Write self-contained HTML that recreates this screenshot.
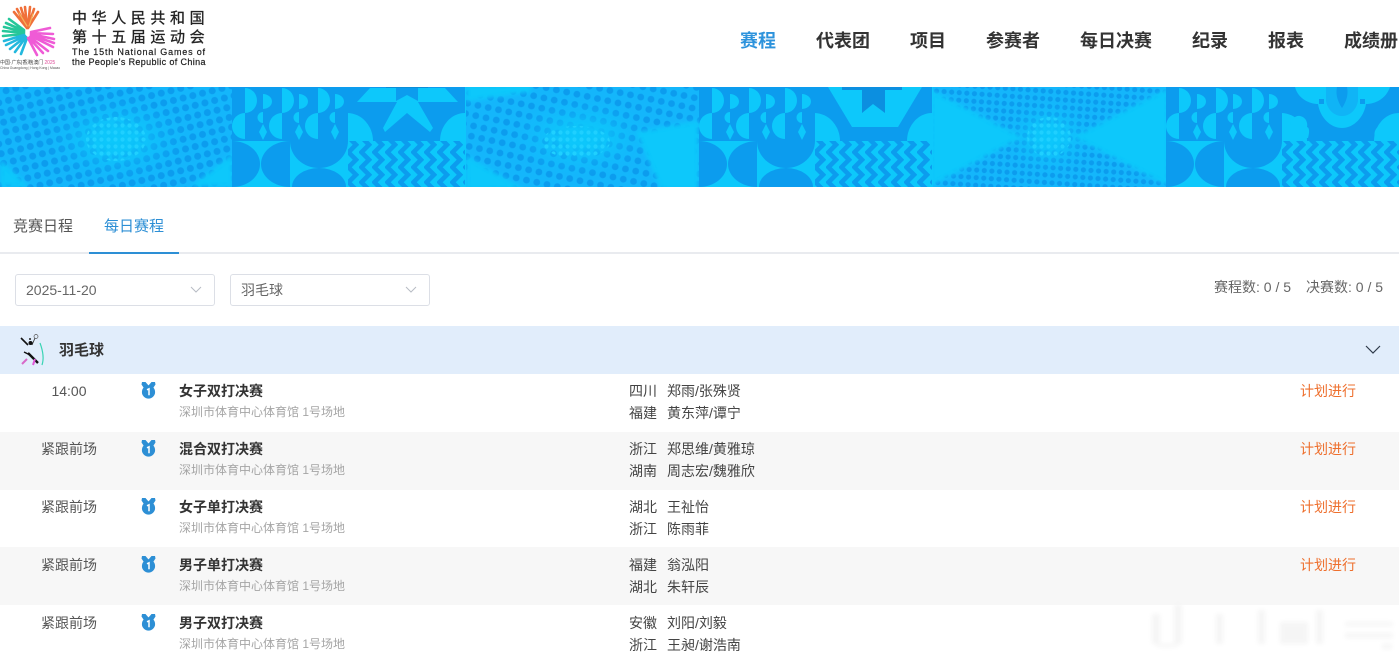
<!DOCTYPE html>
<html lang="zh"><head><meta charset="utf-8"><title>赛程</title>
<style>
html,body{margin:0;padding:0;background:#fff}
#p{position:relative;width:1399px;height:662px;overflow:hidden;background:#fff;font-family:"Liberation Sans","Noto Sans CJK SC",sans-serif;font-size:14px;color:#333}
#p div.t{position:absolute;white-space:nowrap;line-height:20px}
.n{top:30px;font-size:18px;font-weight:700;color:#333;line-height:22px!important}
.r{position:absolute;left:0;width:1399px;height:58px}
.g{background:#f7f7f7}
.time{left:0;width:138px;text-align:center;color:#555}
.b{left:179px;font-weight:700;color:#333}
.v{left:179px;color:#a5a5a5;font-size:12px}
.c{left:629px;color:#444}
.m{left:667px;color:#444}
.s{left:1300px;color:#ee6f2d}
.sel{position:absolute;top:274px;width:198px;height:30px;border:1px solid #dcdfe6;border-radius:3px}
svg{position:absolute}
</style></head><body><div id="p">

<!-- logo -->
<svg style="left:0;top:0" width="62" height="72" viewBox="0 0 62 72">
<g fill="none" stroke-width="2.6" stroke-linecap="round">
<g stroke="#f0703a"><path d="M27 28L14 12M27 28L17 9M27 27L21 8M27 27L25 7M28 27L30 7M28 27L34 9M28 28L38 12"/></g>
<g stroke="#f5b25a" stroke-width="1.2"><path d="M27 26L19 13M29 26L33 14"/></g>
<g stroke="#26c79a"><path d="M24 32L4 27M24 33L3 31M24 34L3 36M24 31L6 23M24 30L9 19"/></g>
<g stroke="#23b8dd"><path d="M24 35L4 41M25 36L6 45M25 37L10 49M26 37L15 52M27 38L21 54"/></g>
<g stroke="#ef5bd6"><path d="M31 36L53 47M31 35L54 43M31 34L54 39M30 37L48 51M29 38L43 53M28 38L37 55M31 33L53 34M31 32L50 28"/></g>
</g></svg>
<div class="t" style="left:0;top:60px;font-size:5px;line-height:6px;color:#444;letter-spacing:-.1px">中国·广东|香港|澳门 <span style="color:#e0529c">2025</span></div>
<div class="t" style="left:0;top:66px;font-size:3.4px;line-height:4px;color:#555">China Guangdong | Hong Kong | Macao</div>
<div class="t" style="left:72px;top:9px;font-size:15px;letter-spacing:4.6px;color:#222;-webkit-text-stroke:.3px #222">中华人民共和国</div>
<div class="t" style="left:72px;top:28px;font-size:15px;letter-spacing:4.6px;color:#222;-webkit-text-stroke:.3px #222">第十五届运动会</div>
<div class="t" style="left:72px;top:42px;font-size:9px;letter-spacing:.82px;color:#222;-webkit-text-stroke:.2px #222">The 15th National Games of</div>
<div class="t" style="left:72px;top:52px;font-size:9px;letter-spacing:.37px;color:#222;-webkit-text-stroke:.2px #222">the People's Republic of China</div>

<!-- nav -->
<div class="t n" style="left:740px;color:#2d93dc">赛程</div>
<div class="t n" style="left:816px">代表团</div>
<div class="t n" style="left:910px">项目</div>
<div class="t n" style="left:986px">参赛者</div>
<div class="t n" style="left:1080px">每日决赛</div>
<div class="t n" style="left:1192px">纪录</div>
<div class="t n" style="left:1268px">报表</div>
<div class="t n" style="left:1344px">成绩册</div>

<!-- banner -->
<svg style="left:0;top:87px" width="1399" height="100" viewBox="0 0 1399 100">
<defs>
<pattern id="d1" width="10" height="10" patternUnits="userSpaceOnUse" patternTransform="rotate(-14)"><circle cx="5" cy="5" r="3.5" fill="#0c9cee"/></pattern>
<pattern id="d2" width="10.5" height="10.5" patternUnits="userSpaceOnUse" patternTransform="rotate(12)"><circle cx="5" cy="5" r="3.4" fill="#0c9cee"/></pattern>
<pattern id="d3" width="7.6" height="7.6" patternUnits="userSpaceOnUse" patternTransform="rotate(4)"><circle cx="3.8" cy="3.8" r="2.6" fill="#0c9cee"/></pattern>
<pattern id="lt" width="7" height="7" patternUnits="userSpaceOnUse"><circle cx="3.5" cy="3.5" r="2.1" fill="#1fd0ff"/></pattern>
<radialGradient id="rg" cx=".5" cy=".5" r=".5"><stop offset="0" stop-color="#000"/><stop offset=".25" stop-color="#111"/><stop offset=".7" stop-color="#bbb"/><stop offset="1" stop-color="#fff"/></radialGradient>
<filter id="sf"><feGaussianBlur stdDeviation="2"/></filter>
<mask id="m1" maskUnits="userSpaceOnUse" x="0" y="0" width="233" height="100"><rect width="233" height="100" fill="#fff"/><ellipse cx="116" cy="52" rx="70" ry="42" fill="url(#rg)"/><path d="M0 72V100H30ZM190 100H233V66Z" fill="#000" filter="url(#sf)"/></mask>
<mask id="m2" maskUnits="userSpaceOnUse" x="0" y="0" width="233" height="100"><rect width="233" height="100" fill="#fff"/><ellipse cx="116" cy="50" rx="70" ry="38" fill="url(#rg)"/><path d="M0 -3H65V5L0 15ZM233 33V103H195L170 45ZM0 68V103H60Z" fill="#000" filter="url(#sf)"/></mask>
<mask id="m3" maskUnits="userSpaceOnUse" x="0" y="0" width="233" height="100"><rect width="233" height="100" fill="#fff"/><ellipse cx="116" cy="50" rx="45" ry="36" fill="url(#rg)"/><path d="M-3 2V100L90 50ZM236 0V100L140 50Z" fill="#000" filter="url(#sf)"/></mask>
<pattern id="zz" width="13" height="15" patternUnits="userSpaceOnUse" x="348" y="54"><rect width="13" height="15" fill="#0dc8fb"/><path d="M2.5 -3.75L10 3.75L2.5 11.25L10 18.75" fill="none" stroke="#0c9cee" stroke-width="4.6"/></pattern>
<g id="geo">
<rect width="233" height="54" fill="#0c9cee"/>
<rect y="54" width="116" height="46" fill="#0dc8fb"/>
<path d="M0 54A28 23 0 0 1 0 100Z" fill="#0c9cee"/>
<path d="M58 54A29 23 0 0 0 58 100Z" fill="#0c9cee"/>
<path d="M58 54A29 27 0 0 0 116 54Z" fill="#0c9cee"/>
<path d="M60 100A27 19 0 0 1 114 100Z" fill="#0c9cee"/>
<g fill="#0dc8fb">
<path d="M13 1A12 12.5 0 0 1 13 26Z"/><path d="M50 1A12 12.5 0 0 1 50 26Z"/><path d="M86 1A12 12.5 0 0 1 86 26Z"/>
<path d="M13 26V52A13 13 0 0 1 13 26Z"/><path d="M50 26V52A13 13 0 0 1 50 26Z"/><path d="M86 26V52A13 13 0 0 1 86 26Z"/>
<path d="M31 7A9 7.5 0 0 1 31 22Z"/><path d="M67 7A9 7.5 0 0 1 67 22Z"/><path d="M103 7A9 7.5 0 0 1 103 22Z"/>
<path d="M31 25A5 5 0 0 0 31 36Z"/><path d="M67 25A5 5 0 0 0 67 36Z"/><path d="M103 25A5 5 0 0 0 103 36Z"/>
<path d="M31 37L35 45L31 53L27 45Z"/><path d="M67 37L71 45L67 53L63 45Z"/><path d="M103 37L107 45L103 53L99 45Z"/>
</g>
<path d="M116 26A26 28 0 0 1 141 54H116Z" fill="#0dc8fb"/>
<path d="M233 26A25 28 0 0 0 208 54H233Z" fill="#0dc8fb"/>
<rect x="116" y="54" width="117" height="46" fill="url(#zz)"/>
</g>
</defs>
<rect width="1399" height="100" fill="#0dc8fb"/>
<g><rect width="233" height="100" fill="#14b6fb" mask="url(#m1)"/><rect width="233" height="100" fill="url(#d1)" mask="url(#m1)"/><ellipse cx="116" cy="52" rx="30" ry="22" fill="url(#lt)"/></g>
<g transform="translate(466 0)"><rect width="233" height="100" fill="#14b6fb" mask="url(#m2)"/><rect width="233" height="100" fill="url(#d2)" mask="url(#m2)"/><ellipse cx="110" cy="55" rx="34" ry="16" fill="url(#lt)"/></g>
<g transform="translate(933 0)"><rect width="233" height="100" fill="#14b6fb" mask="url(#m3)"/><rect width="233" height="100" fill="url(#d3)" mask="url(#m3)"/><ellipse cx="116" cy="50" rx="22" ry="20" fill="url(#lt)"/></g>
<use href="#geo" x="232"/>
<use href="#geo" x="699"/>
<use href="#geo" x="1166"/>
<!-- star -->
<rect x="386" y="0" width="42" height="1" fill="#0a8fd8"/>
<path d="M357 15L370 1H396V14L407 8L418 14V1H445L458 15H418L433 41L430 45L407 26L385 45L383 41L397 15Z" fill="#0dc8fb"/>
<!-- octagon -->
<path d="M828 0H922L898 40H852Z" fill="#0dc8fb"/>
<path d="M842 0H862V3H842ZM885 0H902V3H885ZM862 0H885V26L873 17L862 26Z" fill="#0c8fe0"/>
<!-- flower -->
<path d="M1295 0C1298 12 1310 17 1318 17C1320 30 1330 41 1342 41C1354 41 1364 30 1366 17C1375 17 1386 12 1390 0Z" fill="#0dc8fb"/>
<path d="M1326 0V14C1328 24 1335 29 1342 29C1349 29 1356 24 1358 14V0Z" fill="#10b4f6"/>
<path d="M1342 21C1336 12 1336 5 1337 0H1347C1348 5 1348 12 1342 21Z" fill="#0c9cee"/>
<rect x="1319" y="12" width="5" height="5" fill="#0c9cee"/><rect x="1360" y="12" width="5" height="5" fill="#0c9cee"/>
<path d="M1283 51C1282 44 1285 39 1290 38C1291 32 1296 28 1300 29C1306 30 1308 36 1307 40C1311 41 1308 51 1308 51Z" fill="#0dc8fb"/>
<path d="M1375 51C1373 44 1377 39 1382 38C1383 32 1388 28 1394 28H1399V51Z" fill="#0dc8fb"/>
</svg>

<!-- tabs -->
<div class="t" style="left:13px;top:217px;font-size:15px;color:#555">竞赛日程</div>
<div class="t" style="left:104px;top:217px;font-size:15px;color:#2d8fd5">每日赛程</div>
<div style="position:absolute;left:0;top:252px;width:1399px;height:2px;background:#e9ebef"></div>
<div style="position:absolute;left:89px;top:252px;width:90px;height:2px;background:#2d8fd5"></div>

<!-- selects -->
<div class="sel" style="left:15px"></div>
<div class="sel" style="left:230px"></div>
<div class="t" style="left:26px;top:280px;color:#666">2025-11-20</div>
<div class="t" style="left:241px;top:280px;color:#666">羽毛球</div>
<svg style="left:190px;top:286px" width="12" height="8"><path d="M1 1L6 6L11 1" fill="none" stroke="#b8bcc4"/></svg>
<svg style="left:405px;top:286px" width="12" height="8"><path d="M1 1L6 6L11 1" fill="none" stroke="#b8bcc4"/></svg>
<div class="t" style="left:1214px;top:277px;color:#666;font-size:14px">赛程数: 0 / 5</div>
<div class="t" style="left:1306px;top:277px;color:#666;font-size:14px">决赛数: 0 / 5</div>

<!-- sport header -->
<div style="position:absolute;left:0;top:326px;width:1399px;height:48px;background:#e1edfb"></div>
<svg style="left:16px;top:333px" width="32" height="36" viewBox="0 0 32 36">
<circle cx="14" cy="6" r="1" fill="#222"/><circle cx="20" cy="3.5" r="2" fill="none" stroke="#555" stroke-width=".7"/><path d="M19 5L16 12" stroke="#333" stroke-width=".9"/>
<circle cx="14.5" cy="10" r="2" fill="#111"/><path d="M5 5L12 12" stroke="#111" stroke-width="1.6" fill="none"/>
<path d="M12 20L22 30" stroke="#111" stroke-width="2.4"/><path d="M8 19L14 22" stroke="#111" stroke-width="1.4"/>
<path d="M11 26L6 31" stroke="#d86ac8" stroke-width="2"/><path d="M19 26L17 32" stroke="#e05ad8" stroke-width="2"/>
<path d="M24 10C27 18 28 26 26 32" fill="none" stroke="#39d4b4" stroke-width="1.2"/></svg>
<div class="t" style="left:59px;top:341px;font-size:15px;font-weight:700;color:#333">羽毛球</div>
<svg style="left:1365px;top:345px" width="16" height="11"><path d="M1 1L8 8L15 1" fill="none" stroke="#2e3a4a" stroke-width="1.2"/></svg>

<!-- rows -->
<div class="r g" style="top:432px"></div>
<div class="r g" style="top:547px"></div>

<svg width="0" height="0"><defs><g id="md"><path d="M1 1L4.5 1L7.5 4.5L10.5 1L14 1L14.5 3.5L11.5 8H3.5L.5 3.5Z" fill="#2d8fd5"/><circle cx="7.5" cy="11" r="6.6" fill="#2d8fd5"/><path d="M6 8.8L8 7.8V14.2" fill="none" stroke="#fff" stroke-width="1.5"/></g></defs></svg>

<div class="t time" style="top:381px">14:00</div>
<svg style="left:141px;top:381px" width="16" height="19"><use href="#md"/></svg>
<div class="t b" style="top:381px">女子双打决赛</div><div class="t v" style="top:402px">深圳市体育中心体育馆 1号场地</div>
<div class="t c" style="top:381px">四川</div><div class="t m" style="top:381px">郑雨/张殊贤</div>
<div class="t c" style="top:403px">福建</div><div class="t m" style="top:403px">黄东萍/谭宁</div>
<div class="t s" style="top:381px">计划进行</div>

<div class="t time" style="top:439px">紧跟前场</div>
<svg style="left:141px;top:439px" width="16" height="19"><use href="#md"/></svg>
<div class="t b" style="top:439px">混合双打决赛</div><div class="t v" style="top:460px">深圳市体育中心体育馆 1号场地</div>
<div class="t c" style="top:439px">浙江</div><div class="t m" style="top:439px">郑思维/黄雅琼</div>
<div class="t c" style="top:461px">湖南</div><div class="t m" style="top:461px">周志宏/魏雅欣</div>
<div class="t s" style="top:439px">计划进行</div>

<div class="t time" style="top:497px">紧跟前场</div>
<svg style="left:141px;top:497px" width="16" height="19"><use href="#md"/></svg>
<div class="t b" style="top:497px">女子单打决赛</div><div class="t v" style="top:518px">深圳市体育中心体育馆 1号场地</div>
<div class="t c" style="top:497px">湖北</div><div class="t m" style="top:497px">王祉怡</div>
<div class="t c" style="top:519px">浙江</div><div class="t m" style="top:519px">陈雨菲</div>
<div class="t s" style="top:497px">计划进行</div>

<div class="t time" style="top:555px">紧跟前场</div>
<svg style="left:141px;top:555px" width="16" height="19"><use href="#md"/></svg>
<div class="t b" style="top:555px">男子单打决赛</div><div class="t v" style="top:576px">深圳市体育中心体育馆 1号场地</div>
<div class="t c" style="top:555px">福建</div><div class="t m" style="top:555px">翁泓阳</div>
<div class="t c" style="top:577px">湖北</div><div class="t m" style="top:577px">朱轩辰</div>
<div class="t s" style="top:555px">计划进行</div>

<div class="t time" style="top:613px">紧跟前场</div>
<svg style="left:141px;top:613px" width="16" height="19"><use href="#md"/></svg>
<div class="t b" style="top:613px">男子双打决赛</div><div class="t v" style="top:634px">深圳市体育中心体育馆 1号场地</div>
<div class="t c" style="top:613px">安徽</div><div class="t m" style="top:613px">刘阳/刘毅</div>
<div class="t c" style="top:635px">浙江</div><div class="t m" style="top:635px">王昶/谢浩南</div>

<!-- watermark -->
<svg style="left:1140px;top:600px" width="259" height="62">
<defs><filter id="bl"><feGaussianBlur stdDeviation="2.4"/></filter></defs>
<g filter="url(#bl)" fill="#f5f5f5">
<rect x="12" y="14" width="8" height="30"/><rect x="34" y="4" width="8" height="40"/><rect x="17" y="44" width="20" height="3"/>
<rect x="76" y="14" width="7" height="30"/><rect x="118" y="10" width="7" height="34"/>
<rect x="140" y="22" width="28" height="22"/><rect x="176" y="10" width="7" height="34"/>
<rect x="205" y="22" width="48" height="4"/><rect x="205" y="33" width="48" height="5"/><rect x="242" y="44" width="10" height="5"/>
</g></svg>
</div></body></html>
